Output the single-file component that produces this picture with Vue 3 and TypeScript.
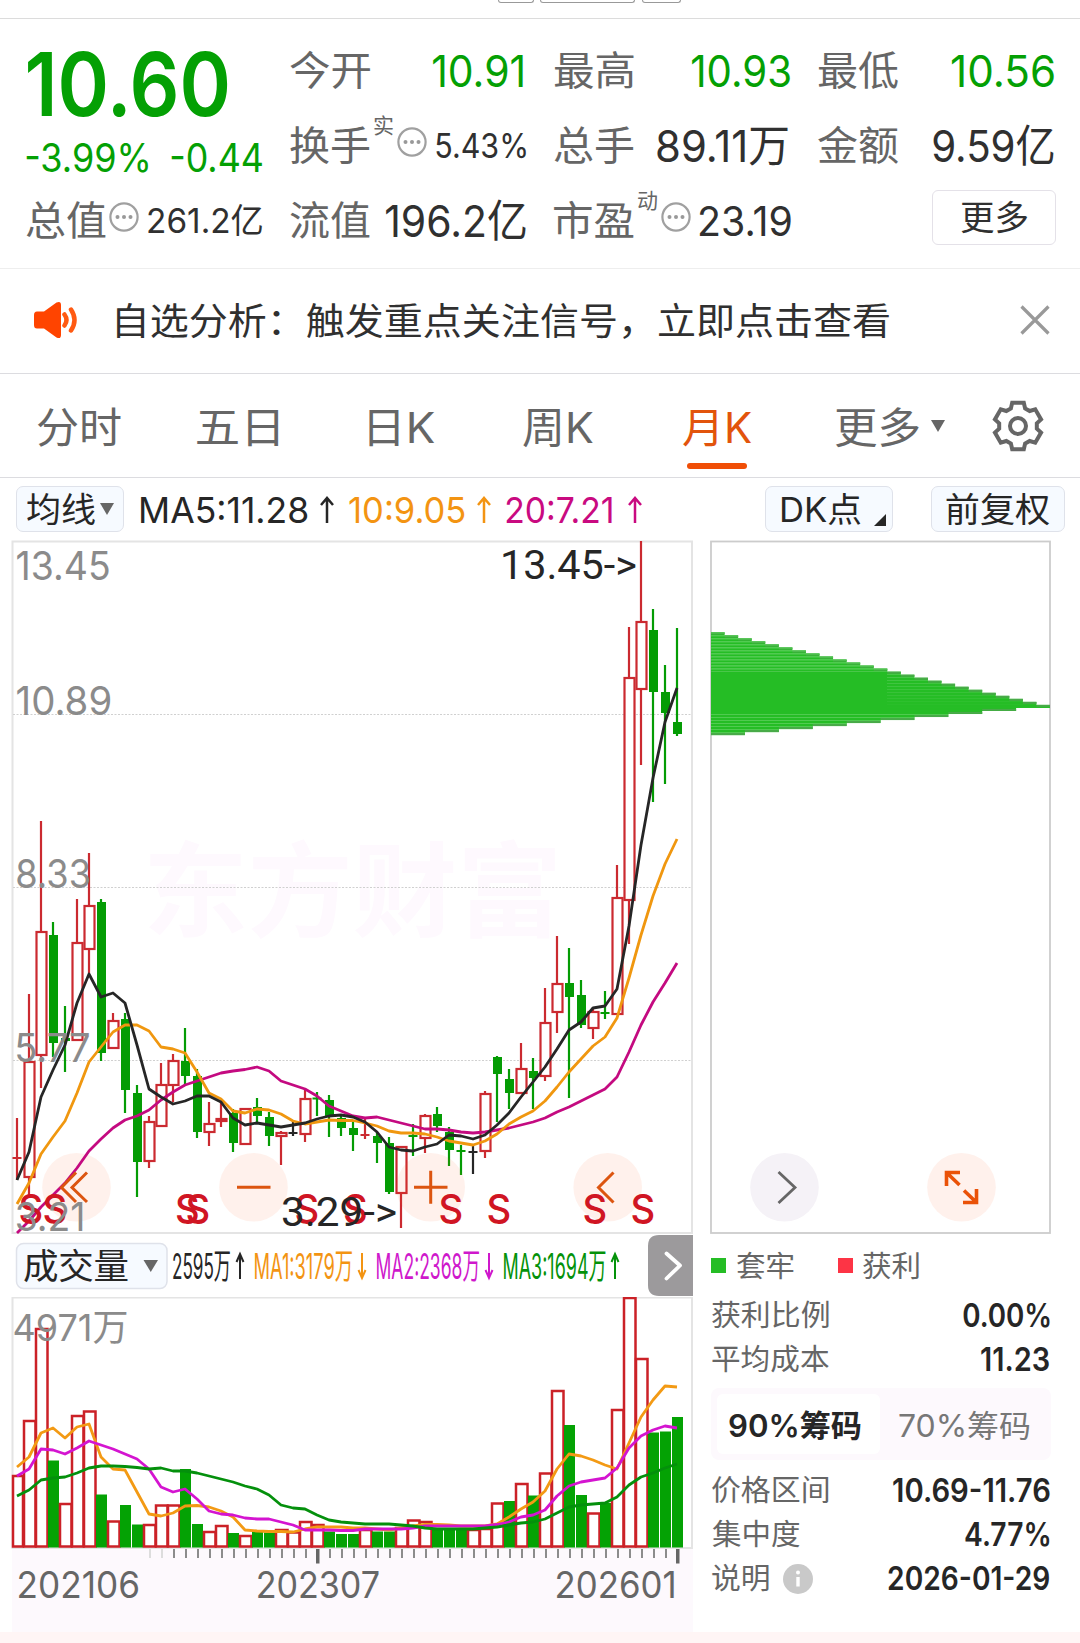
<script setup lang="ts">
type Kind = 'r' | 'g' | 'k'
type Candle = [Kind, number, number, number, number]

const FAMILY = 'Inter, "Noto Sans CJK SC", sans-serif'
const ctx = document.createElement('canvas').getContext('2d')!

function measure(text: string, font: string) {
  ctx.font = font
  const m = ctx.measureText(text)
  return { left: m.actualBoundingBoxLeft, ink: m.actualBoundingBoxLeft + m.actualBoundingBoxRight }
}

// Squeezes a label so that its glyphs fill exactly the given width.
const vFit = {
  mounted(el: HTMLElement, binding: { value: number }) {
    const cs = getComputedStyle(el)
    const { left, ink } = measure((el.textContent ?? '').trim(), `${cs.fontWeight} ${cs.fontSize} ${FAMILY}`)
    const s = binding.value / ink
    el.style.width = `${binding.value}px`
    el.style.transform = `translateX(${left * s}px) scaleX(${s})`
  },
}

interface Label { t: string; size: number; weight: number; color: string; family: string; tf: string }
function label(t: string, x: number, y: number, w: number, size: number, color: string, weight = 400, family = FAMILY): Label {
  const { left, ink } = measure(t, `${weight} ${size}px ${family}`)
  const s = w / ink
  return { t, size, weight, color, family, tf: `translate(${x + left * s} ${y}) scale(${s} 1)` }
}

const cx = (i: number) => 17 + 12 * i
const line = (ys: number[]) => ys.map((y, i) => `${cx(i)},${y}`).join(' ')

const candles: Candle[] = [
  ['r', 1118, 1158, 1158, 1180], ['r', 994, 1062, 1177, 1197], ['r', 821, 932, 1055, 1088], ['g', 922, 935, 1043, 1057],
  ['g', 1006, 1038, 1041, 1072], ['r', 899, 943, 1040, 1040], ['r', 853, 906, 949, 973], ['g', 899, 902, 1053, 1061],
  ['r', 1013, 1021, 1048, 1048], ['g', 1013, 1019, 1090, 1113], ['g', 1085, 1093, 1162, 1197], ['r', 1116, 1122, 1161, 1168],
  ['r', 1063, 1085, 1126, 1126], ['r', 1054, 1061, 1085, 1102], ['g', 1028, 1061, 1076, 1084], ['g', 1069, 1076, 1132, 1138],
  ['r', 1102, 1124, 1132, 1146], ['r', 1101, 1119, 1121, 1127], ['g', 1109, 1113, 1143, 1152], ['r', 1108, 1109, 1144, 1144],
  ['g', 1098, 1107, 1116, 1122], ['g', 1112, 1117, 1136, 1146], ['r', 1131, 1133, 1136, 1165], ['k', 1121, 1133, 1133, 1136],
  ['r', 1089, 1099, 1134, 1142], ['g', 1092, 1098.5, 1098.5, 1116], ['g', 1095, 1100, 1116, 1137], ['g', 1115, 1118, 1128, 1136],
  ['g', 1122, 1128, 1135, 1151], ['r', 1119, 1135, 1135, 1139], ['g', 1132, 1136, 1143, 1163], ['g', 1137, 1143, 1192, 1194],
  ['r', 1146, 1147, 1193, 1228], ['g', 1124, 1136, 1136, 1156], ['r', 1114, 1116, 1138, 1153], ['g', 1107, 1114, 1126, 1132],
  ['g', 1127, 1132, 1150, 1166], ['g', 1145, 1151, 1151, 1175], ['k', 1145, 1152, 1152, 1174], ['r', 1091, 1094, 1151, 1158],
  ['g', 1056, 1057, 1074, 1122], ['g', 1069, 1079, 1093, 1109], ['r', 1043, 1069, 1093, 1093], ['g', 1058, 1071, 1078, 1109],
  ['r', 988, 1023, 1076, 1081], ['r', 936, 984, 1012, 1033], ['g', 948, 983, 997, 1098], ['g', 980, 995, 1025, 1028],
  ['r', 1007, 1012, 1028, 1039], ['g', 991, 1013, 1013, 1019], ['r', 865, 898, 1014, 1014], ['r', 627, 678, 900, 944],
  ['r', 541, 622, 689, 765], ['g', 609, 630, 692, 802], ['g', 665, 692, 713, 784], ['g', 628, 722, 734, 736],
]
const tone: Record<Kind, string> = { r: '#cb2a30', g: '#049c04', k: '#262626' }

const ma5 = line([1180, 1152, 1097, 1070, 1045, 1003, 974, 997, 993, 1003, 1045, 1089, 1097, 1104, 1101, 1096, 1096, 1102, 1118, 1125, 1123, 1125, 1127, 1125, 1123, 1119, 1116, 1115, 1117, 1122, 1132, 1147, 1150, 1151, 1147, 1144, 1135, 1136, 1139, 1135, 1125, 1113, 1097, 1082, 1067, 1049, 1030, 1022, 1008, 1006, 989, 926, 845, 778, 722, 688])
const ma10 = line([1204, 1183, 1154, 1137, 1121, 1093, 1062, 1047, 1032, 1025, 1025, 1031, 1047, 1049, 1053, 1072, 1093, 1099, 1111, 1113, 1109, 1110, 1114, 1121, 1124, 1122, 1120, 1120.5, 1120.5, 1123, 1126, 1131, 1133, 1133, 1134, 1137, 1141, 1143, 1145, 1141, 1134, 1124, 1117, 1111, 1101, 1087, 1072, 1059, 1046, 1037, 1018, 978, 935, 896, 864, 839])
const ma20 = line([1233, 1221, 1207, 1195, 1183, 1168, 1151, 1139, 1128, 1120, 1116, 1110, 1100, 1092, 1085, 1081, 1077, 1073, 1071, 1069.5, 1067, 1071, 1081, 1085, 1089, 1096, 1106, 1111, 1116, 1118, 1117, 1120, 1123, 1126, 1129, 1129, 1130, 1132, 1133, 1132, 1130, 1128, 1125, 1122, 1118, 1112, 1107, 1101, 1095, 1089, 1077, 1052, 1025, 1002, 983, 963])

const volumes: [Kind, number][] = [
  ['r', 1476], ['r', 1421], ['r', 1329], ['g', 1460.5], ['r', 1504], ['r', 1416], ['r', 1411.5], ['g', 1494.5], ['r', 1521.5], ['g', 1505],
  ['g', 1524.5], ['r', 1525], ['r', 1505.5], ['r', 1505.5], ['g', 1469], ['g', 1524], ['r', 1532], ['r', 1526], ['g', 1533], ['r', 1536],
  ['g', 1530.5], ['g', 1532.5], ['r', 1530], ['r', 1532.5], ['r', 1522], ['r', 1525], ['g', 1531.5], ['g', 1534], ['g', 1534], ['r', 1530],
  ['g', 1531.5], ['g', 1531.5], ['r', 1528], ['r', 1520.5], ['r', 1522], ['g', 1529], ['g', 1529], ['g', 1530], ['r', 1530], ['r', 1529],
  ['r', 1503.5], ['g', 1501], ['r', 1484], ['g', 1495.5], ['r', 1473.5], ['r', 1391], ['g', 1425], ['g', 1495], ['r', 1513.5], ['g', 1503],
  ['r', 1410], ['r', 1298], ['r', 1359], ['g', 1432.5], ['g', 1431.5], ['g', 1417],
]
const vma1 = line([1467, 1457, 1433, 1428, 1438, 1427, 1424, 1457, 1469, 1470, 1492, 1514, 1516, 1513, 1506, 1505.5, 1507, 1511, 1517, 1530, 1531, 1531.5, 1531.5, 1532, 1529, 1527, 1527, 1527, 1528, 1528, 1529, 1530, 1528, 1526, 1524.5, 1524.5, 1525, 1526, 1526, 1526, 1524, 1517, 1509, 1502, 1491, 1469, 1454, 1456, 1460, 1465, 1469, 1443, 1417, 1400, 1386, 1387])
const vma2 = line([1476, 1469, 1449, 1450, 1454, 1448, 1441, 1445, 1449, 1454, 1459, 1469, 1487, 1492, 1489, 1499, 1511, 1514, 1515, 1518, 1519, 1519, 1522, 1525, 1530, 1530, 1530, 1530.5, 1530.5, 1529, 1529, 1529, 1529, 1528, 1526, 1526, 1526, 1526, 1526, 1526, 1524.5, 1522, 1517, 1515, 1510, 1496, 1486, 1482, 1480, 1478, 1468, 1448, 1436, 1430, 1426, 1428])
const vma3 = line([1496, 1490, 1480, 1478, 1477, 1473, 1468, 1466, 1466, 1466.5, 1467.5, 1469, 1468, 1471, 1471, 1473, 1476, 1479, 1482, 1486, 1489, 1495, 1505, 1508, 1509, 1515, 1520, 1522, 1523, 1524, 1524, 1524, 1525, 1526, 1528, 1529, 1529, 1529, 1529, 1528, 1527, 1525, 1523, 1522, 1519, 1513, 1507, 1505, 1504, 1503, 1497, 1485, 1477, 1473, 1468, 1464])

const axis: Label[] = [
  label('13.45', 16.5, 580, 92, 40, '#8b8b8b'),
  label('10.89', 16.5, 715, 94, 40, '#8b8b8b'),
  label('8.33', 17, 888, 72.5, 40, '#8b8b8b'),
  label('5.77', 17, 1062, 72, 40, '#8b8b8b'),
  label('3.21', 16.5, 1230.5, 66, 40, '#8b8b8b'),
]
const extremes: Label[] = [
  label('13.45->', 503, 578.5, 133, 40, '#262626', 400, 'Roboto, sans-serif'),
  label('3.29->', 282, 1226, 114, 40, '#262626', 400, 'Roboto, sans-serif'),
]
const signals: Label[] = [31, 55, 187.5, 198, 307, 355.5, 451, 499, 595, 643].map((x) => label('S', x - 10.5, 1223, 21, 40, '#d01523', 500))
const watermark = label('东方财富', 149, 929, 406, 104, '#fef9fe', 700)

const volumeLabels: Label[] = [
  label('2595万', 173, 1279, 57, 35, '#262626'),
  label('MA1:3179万', 255, 1279, 97, 35, '#f39412'),
  label('MA2:2368万', 377, 1279, 102, 35, '#cf18cc'),
  label('MA3:1694万', 504, 1279, 101.5, 35, '#04920a'),
]
const volumeArrows = [
  { x: 240, up: true, c: '#262626' },
  { x: 362, up: false, c: '#f39412' },
  { x: 489, up: false, c: '#cf18cc' },
  { x: 615, up: true, c: '#04920a' },
]
const volumeMax = label('4971万', 14.5, 1341, 112, 37, '#8b8b8b')
const dates: Label[] = [
  label('202106', 18.5, 1598, 120, 36.5, '#666'),
  label('202307', 257.5, 1598, 121, 36.5, '#666'),
  label('202601', 556.5, 1598, 117.5, 36.5, '#666'),
]
const ticks = Array.from({ length: 45 }, (_, k) => k + 11)

// Cost distribution: widens step by step to the peak price, then falls off faster.
const chips = Array.from({ length: 34 }, (_, k) => ({
  y: 632.4 + 3.02 * k,
  w: k < 25 ? 13.56 * (k + 1) : 339 - 33.9 * (k - 24),
  tip: k < 25 ? 13.56 : 33.9,
  striped: k < 13 || k > 26,
}))

const gear = Array.from({ length: 6 }, (_, k) =>
  [[-22, 19], [-14, 24], [14, 24], [22, 19]].map(([d, r]) => {
    const a = ((k * 60 - 90 + d) * Math.PI) / 180
    return `${(26 + r * Math.cos(a)).toFixed(2)},${(26 + r * Math.sin(a)).toFixed(2)}`
  }).join(' '),
).join(' ')

const tabs = [
  { t: '分时', w: 84 }, { t: '五日', w: 81 }, { t: '日K', w: 66 }, { t: '周K', w: 70.5 }, { t: '月K', w: 69, on: true },
]
const averages = [
  { t: 'MA5:11.28', w: 167, c: 'dark' }, { t: '10:9.05', w: 115.5, c: 'orange' }, { t: '20:7.21', w: 106, c: 'magenta' },
]
</script>

<template>
  <main class="page">
    <div class="peek"><i class="p1" /><i class="p2" /><i class="p3" /></div>

    <section class="quote">
      <div class="price">
        <b v-fit="199.5" class="fit last">10.60</b>
        <div class="change"><span v-fit="122" class="fit">-3.99%</span><span v-fit="91" class="fit">-0.44</span></div>
      </div>
      <div class="cell narrow"><span v-fit="80" class="fit name">今开</span><span v-fit="90.5" class="fit val up">10.91</span></div>
      <div class="cell"><span v-fit="80" class="fit name">最高</span><span v-fit="98" class="fit val up">10.93</span></div>
      <div class="cell"><span v-fit="80" class="fit name">最低</span><span v-fit="102" class="fit val up">10.56</span></div>
      <div class="cell">
        <span v-fit="80" class="fit name">换手</span><sup>实</sup>
        <svg class="dots" viewBox="0 0 30 30"><circle cx="15" cy="15" r="13.6" /><circle class="d" cx="8.5" cy="15" r="2" /><circle class="d" cx="15" cy="15" r="2" /><circle class="d" cx="21.5" cy="15" r="2" /></svg>
        <span v-fit="90" class="fit val sm">5.43%</span>
      </div>
      <div class="cell wide"><span v-fit="80" class="fit name">总手</span><span v-fit="131" class="fit val">89.11万</span></div>
      <div class="cell"><span v-fit="80" class="fit name">金额</span><span v-fit="121" class="fit val">9.59亿</span></div>
      <div class="cell">
        <span v-fit="80" class="fit name">总值</span>
        <svg class="dots total" viewBox="0 0 30 30"><circle cx="15" cy="15" r="13.6" /><circle class="d" cx="8.5" cy="15" r="2" /><circle class="d" cx="15" cy="15" r="2" /><circle class="d" cx="21.5" cy="15" r="2" /></svg>
        <span v-fit="114" class="fit val sm">261.2亿</span>
      </div>
      <div class="cell"><span v-fit="80" class="fit name">流值</span><span v-fit="140" class="fit val">196.2亿</span></div>
      <div class="cell">
        <span v-fit="80" class="fit name">市盈</span><sup>动</sup>
        <svg class="dots" viewBox="0 0 30 30"><circle cx="15" cy="15" r="13.6" /><circle class="d" cx="8.5" cy="15" r="2" /><circle class="d" cx="15" cy="15" r="2" /><circle class="d" cx="21.5" cy="15" r="2" /></svg>
        <span v-fit="90.5" class="fit val md">23.19</span>
      </div>
      <div class="cell end"><button class="more"><span v-fit="67" class="fit">更多</span></button></div>
    </section>

    <section class="notice">
      <svg class="speaker" width="46" height="38" viewBox="0 0 46 38">
        <path d="M4 10.500Q1 10.500 1 14v10q0 3.500 3 3.500h7l12.500 9q4.500 2 4.500-2.500V4q0-4.500-4.500-2.500L11 10.500z" fill="#ff4400" />
        <path d="M31.500 13.500q4 5.500 0 11M38 8.500q7 10.500 0 21" fill="none" stroke="#ff5a12" stroke-width="4.500" stroke-linecap="round" />
      </svg>
      <span v-fit="772" class="fit">自选分析：触发重点关注信号，立即点击查看</span>
      <svg class="close" width="30" height="30" viewBox="0 0 30 30"><path d="M1.500 1.500l27 27M28.500 1.500l-27 27" stroke="#999" stroke-width="3.200" /></svg>
    </section>

    <nav class="tabs">
      <div v-for="tab in tabs" :key="tab.t" class="tab" :class="{ on: tab.on }"><span v-fit="tab.w" class="fit">{{ tab.t }}</span></div>
      <div class="tab"><span v-fit="84" class="fit">更多</span><i class="caret" /></div>
      <div class="tab gear">
        <svg width="52" height="52" viewBox="0 0 52 52" fill="none" stroke="#666" stroke-width="4"><polygon :points="gear" /><circle cx="26" cy="26" r="8" /></svg>
      </div>
    </nav>

    <section class="tools">
      <button class="chip avg"><span v-fit="68" class="fit">均线</span><i class="caret" /></button>
      <div v-for="a in averages" :key="a.t" class="ma" :class="a.c">
        <span v-fit="a.w" class="fit">{{ a.t }}</span>
        <svg width="16" height="28" viewBox="0 0 16 28"><path d="M8 27V2M2 9l6-7 6 7" fill="none" stroke="currentColor" stroke-width="2.500" /></svg>
      </div>
      <button class="chip dk"><span v-fit="80" class="fit">DK点</span><i class="corner" /></button>
      <button class="chip adj"><span v-fit="103.5" class="fit">前复权</span></button>
    </section>

    <div class="board">
      <div class="left">
        <svg class="block" width="700" height="698" viewBox="0 537 700 698">
          <text class="t" :transform="watermark.tf" :font-size="watermark.size" :font-weight="watermark.weight" :fill="watermark.color">{{ watermark.t }}</text>
          <rect x="12.500" y="541.500" width="679.500" height="691.500" fill="none" stroke="#e4e4e4" stroke-width="2" />
          <path d="M13 714.500H691M13 887.500H691M13 1060.500H691" stroke="#d0d0d0" stroke-dasharray="2 1.500" />
          <g v-for="(c, i) in candles" :key="i" :stroke="tone[c[0]]" :fill="tone[c[0]]" stroke-width="2.200">
            <template v-if="c[3] - c[2] < 1"><path :d="`M${cx(i)} ${c[1]}V${c[4]}M${cx(i) - 4.5} ${c[2]}h9`" /></template>
            <template v-else-if="c[0] === 'r'">
              <path :d="`M${cx(i)} ${c[1]}V${c[2]}M${cx(i)} ${c[3]}V${c[4]}`" />
              <rect :x="cx(i) - 4.500" :y="c[2]" width="10" :height="c[3] - c[2]" fill="#fff" />
            </template>
            <template v-else>
              <path :d="`M${cx(i)} ${c[1]}V${c[4]}`" />
              <rect :x="cx(i) - 4" :y="c[2]" width="9" :height="c[3] - c[2]" stroke="none" />
            </template>
          </g>
          <g fill="#ff5a1f" fill-opacity=".085"><circle cx="76.500" cy="1187.300" r="34.300" /><circle cx="253.500" cy="1187.300" r="34.300" /><circle cx="430.700" cy="1187.300" r="34.300" /><circle cx="607.700" cy="1187.300" r="34.300" /></g>
          <g fill="none" stroke-width="2.800" stroke-linejoin="round">
            <polyline :points="ma20" stroke="#c40a80" /><polyline :points="ma10" stroke="#f0970f" /><polyline :points="ma5" stroke="#262626" />
          </g>
          <text v-for="(s, i) in signals" :key="i" class="t" :transform="s.tf" :font-size="s.size" :font-weight="s.weight" :fill="s.color">{{ s.t }}</text>
          <text v-for="l in axis" :key="l.t" class="t" :transform="l.tf" :font-size="l.size" :font-weight="l.weight" :fill="l.color">{{ l.t }}</text>
          <text v-for="l in extremes" :key="l.t" :font-family="l.family" :transform="l.tf" :font-size="l.size" :font-weight="l.weight" :fill="l.color">{{ l.t }}</text>
          <path d="M76 1172.500L61.500 1187.500 76 1202M87 1172.500L72 1187.500 87 1202M237 1187.300h33.500M414 1187.300h33.500M430.700 1170.800v33M613.500 1172.500L598.500 1187.500 613.500 1202.500" fill="none" stroke="#dc5510" stroke-width="3" />
        </svg>

        <svg class="block" width="700" height="62" viewBox="0 1235 700 62">
          <rect x="16.500" y="1243.500" width="150.500" height="45" rx="7" fill="#f6faff" stroke="#dfe2ea" stroke-width="1.500" />
          <text class="t" font-size="35.500" fill="#262626" x="23" y="1279" textLength="106">成交量</text>
          <path d="M143.500 1260h14.500l-7.250 12z" fill="#666" />
          <text v-for="l in volumeLabels" :key="l.t" class="t" :transform="l.tf" :font-size="l.size" :fill="l.color">{{ l.t }}</text>
          <path v-for="a in volumeArrows" :key="a.x" :d="a.up ? `M${a.x} 1279V1254M${a.x - 3.5} 1262l3.500-8 3.500 8` : `M${a.x} 1253V1278M${a.x - 3.5} 1270l3.500 8 3.500-8`" fill="none" :stroke="a.c" stroke-width="2" />
          <path d="M693 1235V1296H659q-11 0-11-11V1246q0-11 11-11z" fill="#9c9a9c" />
          <path d="M666.500 1253.500l13.500 12-13.500 13" fill="none" stroke="#fff" stroke-width="3.800" stroke-linecap="round" stroke-linejoin="round" />
        </svg>

        <svg class="block" width="700" height="335" viewBox="0 1297 700 335">
          <rect x="12" y="1548" width="681" height="84" fill="#fdf9fd" />
          <rect x="12.500" y="1297.500" width="679.500" height="250.500" fill="none" stroke="#e4e4e4" stroke-width="2" />
          <template v-for="(v, i) in volumes" :key="i">
            <rect v-if="v[0] === 'r'" :x="Math.max(cx(i) - 5, 13)" :y="v[1]" :width="i ? 11.5 : 10" :height="1546.5 - v[1]" fill="#fff" stroke="#cb2127" stroke-width="2.500" />
            <rect v-else :x="cx(i) - 5" :y="v[1]" width="11" :height="1547.5 - v[1]" fill="#04a204" />
          </template>
          <g fill="none" stroke-width="2.800" stroke-linejoin="round">
            <polyline :points="vma1" stroke="#f39a14" /><polyline :points="vma2" stroke="#d414d0" /><polyline :points="vma3" stroke="#04900c" />
          </g>
          <text class="t" :transform="volumeMax.tf" :font-size="volumeMax.size" :font-weight="volumeMax.weight" :fill="volumeMax.color">{{ volumeMax.t }}</text>
          <rect v-for="k in ticks" :key="k" :x="cx(k) + (k === 25 || k === 55 ? -1 : 0)" y="1549" :width="k === 25 || k === 55 ? 3.5 : 2" :height="k === 25 || k === 55 ? 14.5 : 9" :fill="k < 13 ? '#ddd' : k === 25 || k === 55 ? '#666' : '#8c8c8c'" />
          <text v-for="l in dates" :key="l.t" class="t" :transform="l.tf" :font-size="l.size" :fill="l.color">{{ l.t }}</text>
        </svg>
      </div>

      <aside class="right">
        <svg class="block" width="342" height="698" viewBox="710 537 342 698">
          <rect x="711" y="541.500" width="339" height="691.500" fill="none" stroke="#ccc" stroke-width="1.800" />
          <template v-for="(c, i) in chips" :key="i">
            <rect x="711" :y="c.y" :width="c.w" height="3.100" fill="#25bd25" />
            <rect :x="711 + c.w - c.tip" :y="i < 25 ? c.y : c.y + 1" :width="c.tip" height="2" fill="#49aa49" />
            <rect v-if="c.striped" x="711" :y="c.y" :width="c.w" height="1" fill="#52cc52" />
          </template>
          <rect x="711" y="672.500" width="176" height="41" fill="#25bd25" />
          <circle cx="784.500" cy="1187.300" r="34.300" fill="#f5f2f7" />
          <path d="M778.500 1172L795 1187.500 778.500 1203" fill="none" stroke="#666" stroke-width="2.800" />
          <circle cx="961.500" cy="1187.300" r="34.300" fill="#fff1ec" />
          <path d="M960 1172.500H946.500V1186M947 1173l12.500 12M963 1202.500H976.500V1189M976 1202l-12-11.500" fill="none" stroke="#ea5208" stroke-width="3.600" />
        </svg>
        <div class="legend">
          <i class="sq trapped" /><span v-fit="57" class="fit">套牢</span><i class="sq gain" /><span v-fit="56" class="fit">获利</span>
        </div>
        <dl class="stats first">
          <div><dt v-fit="116.5" class="fit">获利比例</dt><dd v-fit="86.5" class="fit">0.00%</dd></div>
          <div><dt v-fit="116.5" class="fit">平均成本</dt><dd v-fit="68" class="fit">11.23</dd></div>
        </dl>
        <div class="switch"><div class="opt on"><span v-fit="132" class="fit">90%筹码</span></div><div class="opt off"><span v-fit="131" class="fit">70%筹码</span></div></div>
        <dl class="stats">
          <div><dt v-fit="116.5" class="fit">价格区间</dt><dd v-fit="156.5" class="fit">10.69-11.76</dd></div>
          <div><dt v-fit="87.5" class="fit">集中度</dt><dd v-fit="84" class="fit">4.77%</dd></div>
          <div>
            <dt v-fit="56.5" class="fit">说明</dt>
            <svg class="info" width="30" height="30" viewBox="0 0 30 30"><circle cx="15" cy="15" r="15" fill="#c9c9c9" /><circle cx="15" cy="8.500" r="2" fill="#fff" /><path d="M15 13v9.500" stroke="#fff" stroke-width="3.400" /></svg>
            <dd v-fit="161" class="fit">2026-01-29</dd>
          </div>
        </dl>
      </aside>
    </div>
    <footer class="foot" />
  </main>
</template>

<style>
body { background: #fff; }
</style>

<style scoped>
.page { width: 1080px; height: 1643px; overflow: hidden; display: flex; flex-direction: column; background: #fff; color: #303030; font-family: Inter, "Noto Sans CJK SC", sans-serif; }
.page * { box-sizing: border-box; }
button { font: inherit; color: inherit; padding: 0; }
.fit { display: block; flex: none; white-space: nowrap; transform-origin: 0 50%; }
.t { font-family: Inter, "Noto Sans CJK SC", sans-serif; }
.block { display: block; flex: none; }

.peek { height: 19px; flex: none; border-bottom: 1.5px solid #dcdcdc; display: flex; padding-left: 498px; }
.peek i { height: 3px; border: 1.5px solid #999; border-top: 0; border-radius: 0 0 6px 6px; }
.p1 { width: 36px; margin-right: 6px; }
.p2 { width: 95px; margin-right: 7px; }
.p3 { width: 39px; }

.quote { height: 250px; flex: none; padding: 14px 25px 0 26px; display: grid; grid-template-columns: repeat(4, 237px); grid-template-rows: repeat(3, 75px); column-gap: 27px; border-bottom: 1.5px solid #eee; }
.price { grid-row: span 2; color: #04a004; padding-right: 1px; }
.last { margin: 18px 0 0 2px; font-size: 88px; line-height: 66px; font-weight: 600; }
.change { display: flex; justify-content: space-between; margin-top: 25px; font-size: 39px; line-height: 32px; }
.cell { display: flex; align-items: center; line-height: 44px; height: 75px; padding-right: 1px; }
.cell.narrow { padding-right: 4px; }
.cell.wide { padding-right: 3px; }
.name { font-size: 40px; color: #666; }
.val { font-size: 44px; margin-left: auto; }
.val.up { color: #04a004; }
.val.sm { font-size: 34px; }
.val.md { font-size: 41px; }
sup { font-size: 21px; line-height: 22px; color: #666; width: 21px; margin: 0 3px 40px 3px; }
.dots { width: 30px; height: 30px; margin: -8px 0 0; fill: none; stroke: #a0a0a0; stroke-width: 2.2; flex: none; }
.dots.total { margin-left: 3px; }
.dots .d { fill: #999; stroke: none; }
.cell.end { justify-content: flex-end; padding: 0; }
.more { width: 124px; height: 55px; margin: -6px -1px 0 0; border: 1.5px solid #e4e1e8; border-radius: 6px; background: #fff; display: flex; justify-content: center; font-size: 34px; line-height: 53px; }

.notice { height: 105px; flex: none; display: flex; align-items: center; padding: 0 30px 2px 33px; border-bottom: 1.5px solid #dcdce0; font-size: 37px; line-height: 44px; }
.notice .fit { margin-top: 4px; }
.speaker { margin-right: 38px; }
.close { margin-left: auto; }

.tabs { height: 104px; flex: none; display: grid; grid-template-columns: repeat(5, 160px) 180px 76px; border-bottom: 1.5px solid #dcdce0; font-size: 42px; color: #666; }
.tab { display: flex; align-items: center; justify-content: center; line-height: 50px; position: relative; }
.tab .fit { margin: 4px 3px 0 0; }
.on.tab { color: #e2540c; }
.on.tab .fit { margin-right: 5px; }
.tab:nth-child(2) .fit { margin-right: 6px; }
.tab:nth-child(3) .fit { margin-right: -3px; }
.on.tab::after { content: ""; position: absolute; left: 47px; bottom: 8px; width: 60px; height: 6px; border-radius: 3px; background: #f04e06; }
.caret { border: 7.5px solid transparent; border-top: 12px solid #666; border-bottom: 0; margin-left: 9px; }

.tools { height: 59px; flex: none; display: flex; align-items: flex-start; padding: 8px 15px 0 16px; }
.chip { display: flex; height: 46px; border: 1.5px solid #dfe2ea; border-radius: 7px; background: #f6faff; align-items: center; font-size: 34px; line-height: 40px; color: #262626; position: relative; }
.chip .fit { margin-top: 2px; }
.avg { width: 108px; padding-left: 10px; margin-right: 17px; }
.avg .caret { margin-left: 5px; }
.ma { display: flex; align-items: center; height: 46px; padding-top: 1px; font-size: 36px; line-height: 42px; gap: 11px; margin-right: 14px; }
.ma svg { flex: none; }
.ma .fit { margin-top: 1px; }
.dark { color: #262626; }
.orange { color: #f39412; }
.magenta { color: #c90a80; gap: 15px; }
.dk { width: 128px; padding-left: 15px; margin-left: auto; }
.corner { position: absolute; right: 6px; bottom: 5px; border-left: 12px solid transparent; border-bottom: 12px solid #262626; }
.adj { width: 134px; margin-left: 38px; padding-left: 13px; }

.board { display: flex; gap: 10px; height: 1095px; flex: none; }
.right { width: 342px; display: flex; flex-direction: column; }
.legend { height: 60px; display: flex; align-items: center; padding-left: 1px; font-size: 29px; line-height: 32px; color: #666; }
.legend .fit { margin-top: 3px; }
.sq { width: 15px; height: 15px; margin-right: 10.5px; }
.trapped { background: #25bd25; }
.gain { background: #fd3445; margin-left: 44px; }
.stats { margin: 0; width: 339px; padding-left: 2px; }
.stats.first { margin: -1px 0 1px; }
.stats > div { display: flex; align-items: center; height: 44px; line-height: 34px; }
.stats dt { font-size: 29px; color: #666; }
.stats dd { margin: 0 0 0 auto; font-size: 32px; font-weight: 600; color: #262626; }
.info { margin-left: 14px; }
.switch { display: flex; margin: 5px 0 9px 1px; width: 340px; height: 72px; border-radius: 8px; background: #fdf9fd; padding: 6px; font-size: 31px; line-height: 36px; color: #777; }
.opt { width: 163px; display: flex; align-items: center; border-radius: 6px; padding: 3px 0 0 12px; }
.opt.off { padding-left: 19px; }
.opt.on { background: #fff; color: #262626; font-weight: 600; }
.foot { flex: 1; background: #fff5f5; }
</style>
